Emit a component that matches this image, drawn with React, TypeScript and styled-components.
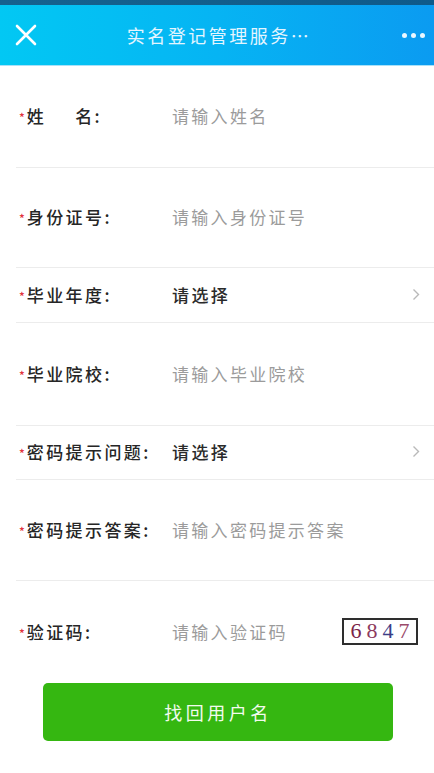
import styled, { createGlobalStyle } from 'styled-components';

const GlobalStyle = createGlobalStyle`
  html, body {
    margin: 0;
    padding: 0;
    background: #fff;
  }
  body {
    font-family: 'Noto Sans CJK SC', 'Noto Sans', sans-serif;
  }
`;

const Page = styled.div`
  width: 434px;
  min-height: 773px;
  background: #fff;
`;

const StatusStrip = styled.div`
  height: 5px;
  background: linear-gradient(90deg, #16628e, #0f5a8a);
`;

const Header = styled.header`
  height: 60px;
  display: grid;
  grid-template-columns: 60px 1fr 60px;
  align-items: center;
  background: linear-gradient(90deg, #02c8f3 0%, #06b4f3 50%, #0b9bf1 100%);
  border-bottom: 1px solid #a9e1f8;
`;

const CloseButton = styled.div`
  display: flex;
  align-items: center;
  padding-left: 15px;
`;

const Title = styled.h1`
  margin: 0;
  font-size: 18px;
  font-weight: 400;
  letter-spacing: 2.5px;
  color: #e4f5ff;
  text-align: center;
  white-space: nowrap;
  padding-left: 4px;
`;

const MoreButton = styled.div`
  display: flex;
  justify-content: flex-end;
  gap: 4px;
  padding-right: 9px;
`;

const Dot = styled.span`
  width: 5px;
  height: 5px;
  border-radius: 50%;
  background: #eaf7ff;
`;

const Row = styled.div<{ $height: number; $last?: boolean }>`
  height: ${(p) => p.$height}px;
  margin-left: 16px;
  padding: 0 14px 2px 3px;
  box-sizing: border-box;
  display: flex;
  align-items: center;
  border-bottom: ${(p) => (p.$last ? 'none' : '1px solid #ececec')};
`;

const Label = styled.div`
  width: 153px;
  flex-shrink: 0;
  display: flex;
  align-items: center;
  font-size: 17px;
  letter-spacing: 2.4px;
  color: #262626;
  font-weight: 500;
`;

const Star = styled.span`
  color: #e2333c;
  font-size: 12px;
  letter-spacing: 0;
  margin-right: 2px;
  position: relative;
  top: 1px;
`;

const NameGap = styled.span`
  display: inline-block;
  width: 29px;
`;

const Value = styled.div<{ $placeholder?: boolean }>`
  flex: 1;
  font-size: 17px;
  letter-spacing: ${(p) => (p.$placeholder ? '2.3px' : '2.4px')};
  color: ${(p) => (p.$placeholder ? '#9b9b9b' : '#2a2a2a')};
  font-weight: ${(p) => (p.$placeholder ? 400 : 500)};
  white-space: nowrap;
`;

const Chevron = styled.svg`
  width: 8px;
  height: 13px;
  flex-shrink: 0;
`;

const Captcha = styled.div`
  box-sizing: border-box;
  width: 76px;
  height: 27px;
  margin-right: 2px;
  border: 2px solid #2e2e2e;
  display: flex;
  align-items: center;
  justify-content: center;
  font-family: 'Liberation Serif', 'DejaVu Serif', serif;
  font-size: 22px;
  font-weight: 400;
  letter-spacing: 5px;
  padding-left: 5px;
  line-height: 1;
`;

const Digit = styled.span<{ $color: string }>`
  color: ${(p) => p.$color};
`;

const ButtonWrap = styled.div`
  display: flex;
  justify-content: center;
  padding-left: 2px;
`;

const SubmitButton = styled.button`
  width: 350px;
  height: 58px;
  border: none;
  border-radius: 5px;
  background: #35b711;
  color: #f2fbee;
  font-family: 'Noto Sans CJK SC', sans-serif;
  font-size: 18px;
  letter-spacing: 3.5px;
  padding-bottom: 2px;
  cursor: pointer;
`;

const Arrow = () => (
  <Chevron viewBox="0 0 8 13">
    <polyline points="1.5,1.5 6.5,6.5 1.5,11.5" fill="none" stroke="#b9b9b9" strokeWidth="1.4" />
  </Chevron>
);

const captchaDigits = [
  { d: '6', c: '#7b2448' },
  { d: '8', c: '#8d3a5e' },
  { d: '4', c: '#3d3d86' },
  { d: '7', c: '#9a4a6a' },
];

export default function App() {
  return (
    <Page>
      <GlobalStyle />
      <StatusStrip />
      <Header>
        <CloseButton>
          <svg width="22" height="22" viewBox="0 0 22 22">
            <path d="M2 2 L20 20 M20 2 L2 20" stroke="#fff" strokeWidth="2.6" strokeLinecap="round" />
          </svg>
        </CloseButton>
        <Title>实名登记管理服务…</Title>
        <MoreButton>
          <Dot />
          <Dot />
          <Dot />
        </MoreButton>
      </Header>

      <Row $height={102}>
        <Label>
          <Star>*</Star>姓<NameGap />名:
        </Label>
        <Value $placeholder>请输入姓名</Value>
      </Row>
      <Row $height={100}>
        <Label>
          <Star>*</Star>身份证号:
        </Label>
        <Value $placeholder>请输入身份证号</Value>
      </Row>
      <Row $height={55}>
        <Label>
          <Star>*</Star>毕业年度:
        </Label>
        <Value>请选择</Value>
        <Arrow />
      </Row>
      <Row $height={103}>
        <Label>
          <Star>*</Star>毕业院校:
        </Label>
        <Value $placeholder>请输入毕业院校</Value>
      </Row>
      <Row $height={54}>
        <Label>
          <Star>*</Star>密码提示问题:
        </Label>
        <Value>请选择</Value>
        <Arrow />
      </Row>
      <Row $height={101}>
        <Label>
          <Star>*</Star>密码提示答案:
        </Label>
        <Value $placeholder>请输入密码提示答案</Value>
      </Row>
      <Row $height={102} $last>
        <Label>
          <Star>*</Star>验证码:
        </Label>
        <Value $placeholder>请输入验证码</Value>
        <Captcha>
          {captchaDigits.map((x, i) => (
            <Digit key={i} $color={x.c}>
              {x.d}
            </Digit>
          ))}
        </Captcha>
      </Row>

      <ButtonWrap>
        <SubmitButton type="button">找回用户名</SubmitButton>
      </ButtonWrap>
    </Page>
  );
}
